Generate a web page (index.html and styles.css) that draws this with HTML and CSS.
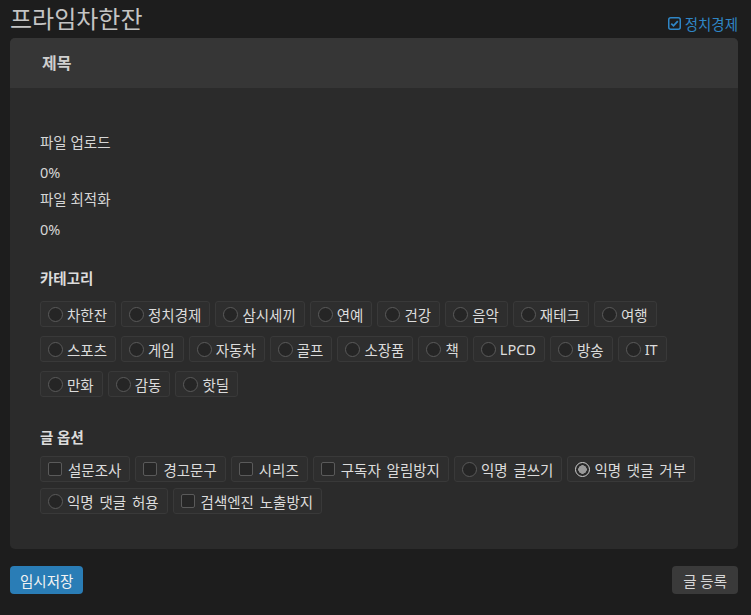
FILE: index.html
```html
<!DOCTYPE html>
<html lang="ko">
<head>
    <meta charset="UTF-8">
    <meta name="viewport" content="width=device-width, initial-scale=1.0">
    <title>글쓰기</title>
    <link rel="stylesheet" href="styles.css">
</head>
<body>
    <div class="page">
        <div class="topbar">
            <h1 class="board-title">프라임차한잔</h1>
            <label class="board-filter">
                <svg width="13" height="13" viewBox="0 0 13 13">
                    <rect x="0.75" y="0.75" width="11.5" height="11.5" rx="2" fill="none" stroke="#2f86c6" stroke-width="1.5"/>
                    <path d="M3.3 6.6 L5.5 8.8 L9.8 4.2" fill="none" stroke="#2f86c6" stroke-width="1.8"/>
                </svg>
                정치경제
            </label>
        </div>

        <div class="card">
            <div class="card-header">제목</div>
            <div class="card-body">
                <p class="progress-label">파일 업로드</p>
                <p class="progress-value">0%</p>
                <p class="progress-label">파일 최적화</p>
                <p class="progress-value">0%</p>

                <h2 class="section-title">카테고리</h2>
                <div class="chips categories">
                    <label class="chip"><span class="radio"></span>차한잔</label>
                    <label class="chip"><span class="radio"></span>정치경제</label>
                    <label class="chip"><span class="radio"></span>삼시세끼</label>
                    <label class="chip"><span class="radio"></span>연예</label>
                    <label class="chip"><span class="radio"></span>건강</label>
                    <label class="chip"><span class="radio"></span>음악</label>
                    <label class="chip"><span class="radio"></span>재테크</label>
                    <label class="chip"><span class="radio"></span>여행</label>
                    <label class="chip"><span class="radio"></span>스포츠</label>
                    <label class="chip"><span class="radio"></span>게임</label>
                    <label class="chip"><span class="radio"></span>자동차</label>
                    <label class="chip"><span class="radio"></span>골프</label>
                    <label class="chip"><span class="radio"></span>소장품</label>
                    <label class="chip"><span class="radio"></span>책</label>
                    <label class="chip"><span class="radio"></span>LPCD</label>
                    <label class="chip"><span class="radio"></span>방송</label>
                    <label class="chip"><span class="radio"></span>IT</label>
                    <label class="chip"><span class="radio"></span>만화</label>
                    <label class="chip"><span class="radio"></span>감동</label>
                    <label class="chip"><span class="radio"></span>핫딜</label>
                </div>

                <h2 class="section-title options-title">글 옵션</h2>
                <div class="chips options">
                    <label class="chip"><span class="check"></span>설문조사</label>
                    <label class="chip"><span class="check"></span>경고문구</label>
                    <label class="chip"><span class="check"></span>시리즈</label>
                    <label class="chip"><span class="check"></span>구독자 알림방지</label>
                    <label class="chip"><span class="radio"></span>익명 글쓰기</label>
                    <label class="chip"><span class="radio checked"></span>익명 댓글 거부</label>
                    <label class="chip"><span class="radio"></span>익명 댓글 허용</label>
                    <label class="chip"><span class="check"></span>검색엔진 노출방지</label>
                </div>
            </div>
        </div>

        <div class="actions">
            <button class="btn btn-primary">임시저장</button>
            <button class="btn btn-dark">글 등록</button>
        </div>
    </div>
</body>
</html>
```

FILE: styles.css
```css
body {
    margin: 0;
    background: #1d1d1d;
    color: #d6d6d6;
    font-family: "Noto Sans", "Noto Sans CJK KR", sans-serif;
    font-size: 14.5px;
}

.page {
    padding: 0 13px 0 10px;
}

.topbar {
    display: flex;
    justify-content: space-between;
    align-items: baseline;
    height: 38px;
}

.board-title {
    margin: 0;
    font-size: 24px;
    font-weight: normal;
    line-height: 38px;
    color: #c4c4c4;
}

.board-filter {
    display: flex;
    align-items: center;
    gap: 4px;
    color: #2f86c6;
    position: relative;
    top: 2px;
}

.card {
    background: #2b2b2b;
    border-radius: 5px;
    overflow: hidden;
}

.card-header {
    background: #363636;
    height: 50px;
    line-height: 50px;
    padding-left: 32px;
    font-weight: bold;
    font-size: 16px;
    color: #cfcfcf;
}

.card-body {
    padding: 44px 30px 35px;
}

.progress-label,
.progress-value {
    margin: 0;
    line-height: 20px;
}

.progress-label {
    margin-bottom: 10px;
}

.progress-value {
    margin-bottom: 7px;
}

.section-title {
    margin: 29px 0 13px;
    font-size: 14.5px;
    font-weight: bold;
    line-height: 20px;
    color: #dcdcdc;
}

.options-title {
    margin-top: 30px;
    margin-bottom: 9px;
}

.chips {
    display: flex;
    flex-wrap: wrap;
    column-gap: 5px;
    row-gap: 9px;
}

.chips.options {
    row-gap: 6px;
    word-spacing: 2px;
}

.chip {
    display: flex;
    align-items: center;
    gap: 4px;
    height: 24px;
    padding: 0 8px 0 7px;
    background: #2e2e2e;
    border: 1px solid #393939;
    border-radius: 3px;
    color: #dcdcdc;
}

.radio {
    flex: none;
    width: 13px;
    height: 13px;
    border: 1px solid #5a5a5a;
    border-radius: 50%;
    background: #252525;
}

.radio.checked {
    border-color: #cfcfcf;
    background: radial-gradient(circle, #9a9a9a 0 4px, #2a2a2a 4.5px);
}

.check {
    flex: none;
    width: 12px;
    height: 12px;
    border: 1px solid #5a5a5a;
    border-radius: 2px;
    background: #262626;
    margin-right: 2px;
}

.actions {
    display: flex;
    justify-content: space-between;
    margin-top: 17px;
}

.btn {
    height: 28px;
    padding: 0 10px;
    border: none;
    border-radius: 4px;
    font-family: inherit;
    font-size: 14.5px;
    cursor: pointer;
}

.btn-primary {
    background: #2a7db6;
    color: #f2f2f2;
}

.btn-dark {
    padding: 0 11px;
    background: #3a3a3a;
    color: #d8d8d8;
}
```
